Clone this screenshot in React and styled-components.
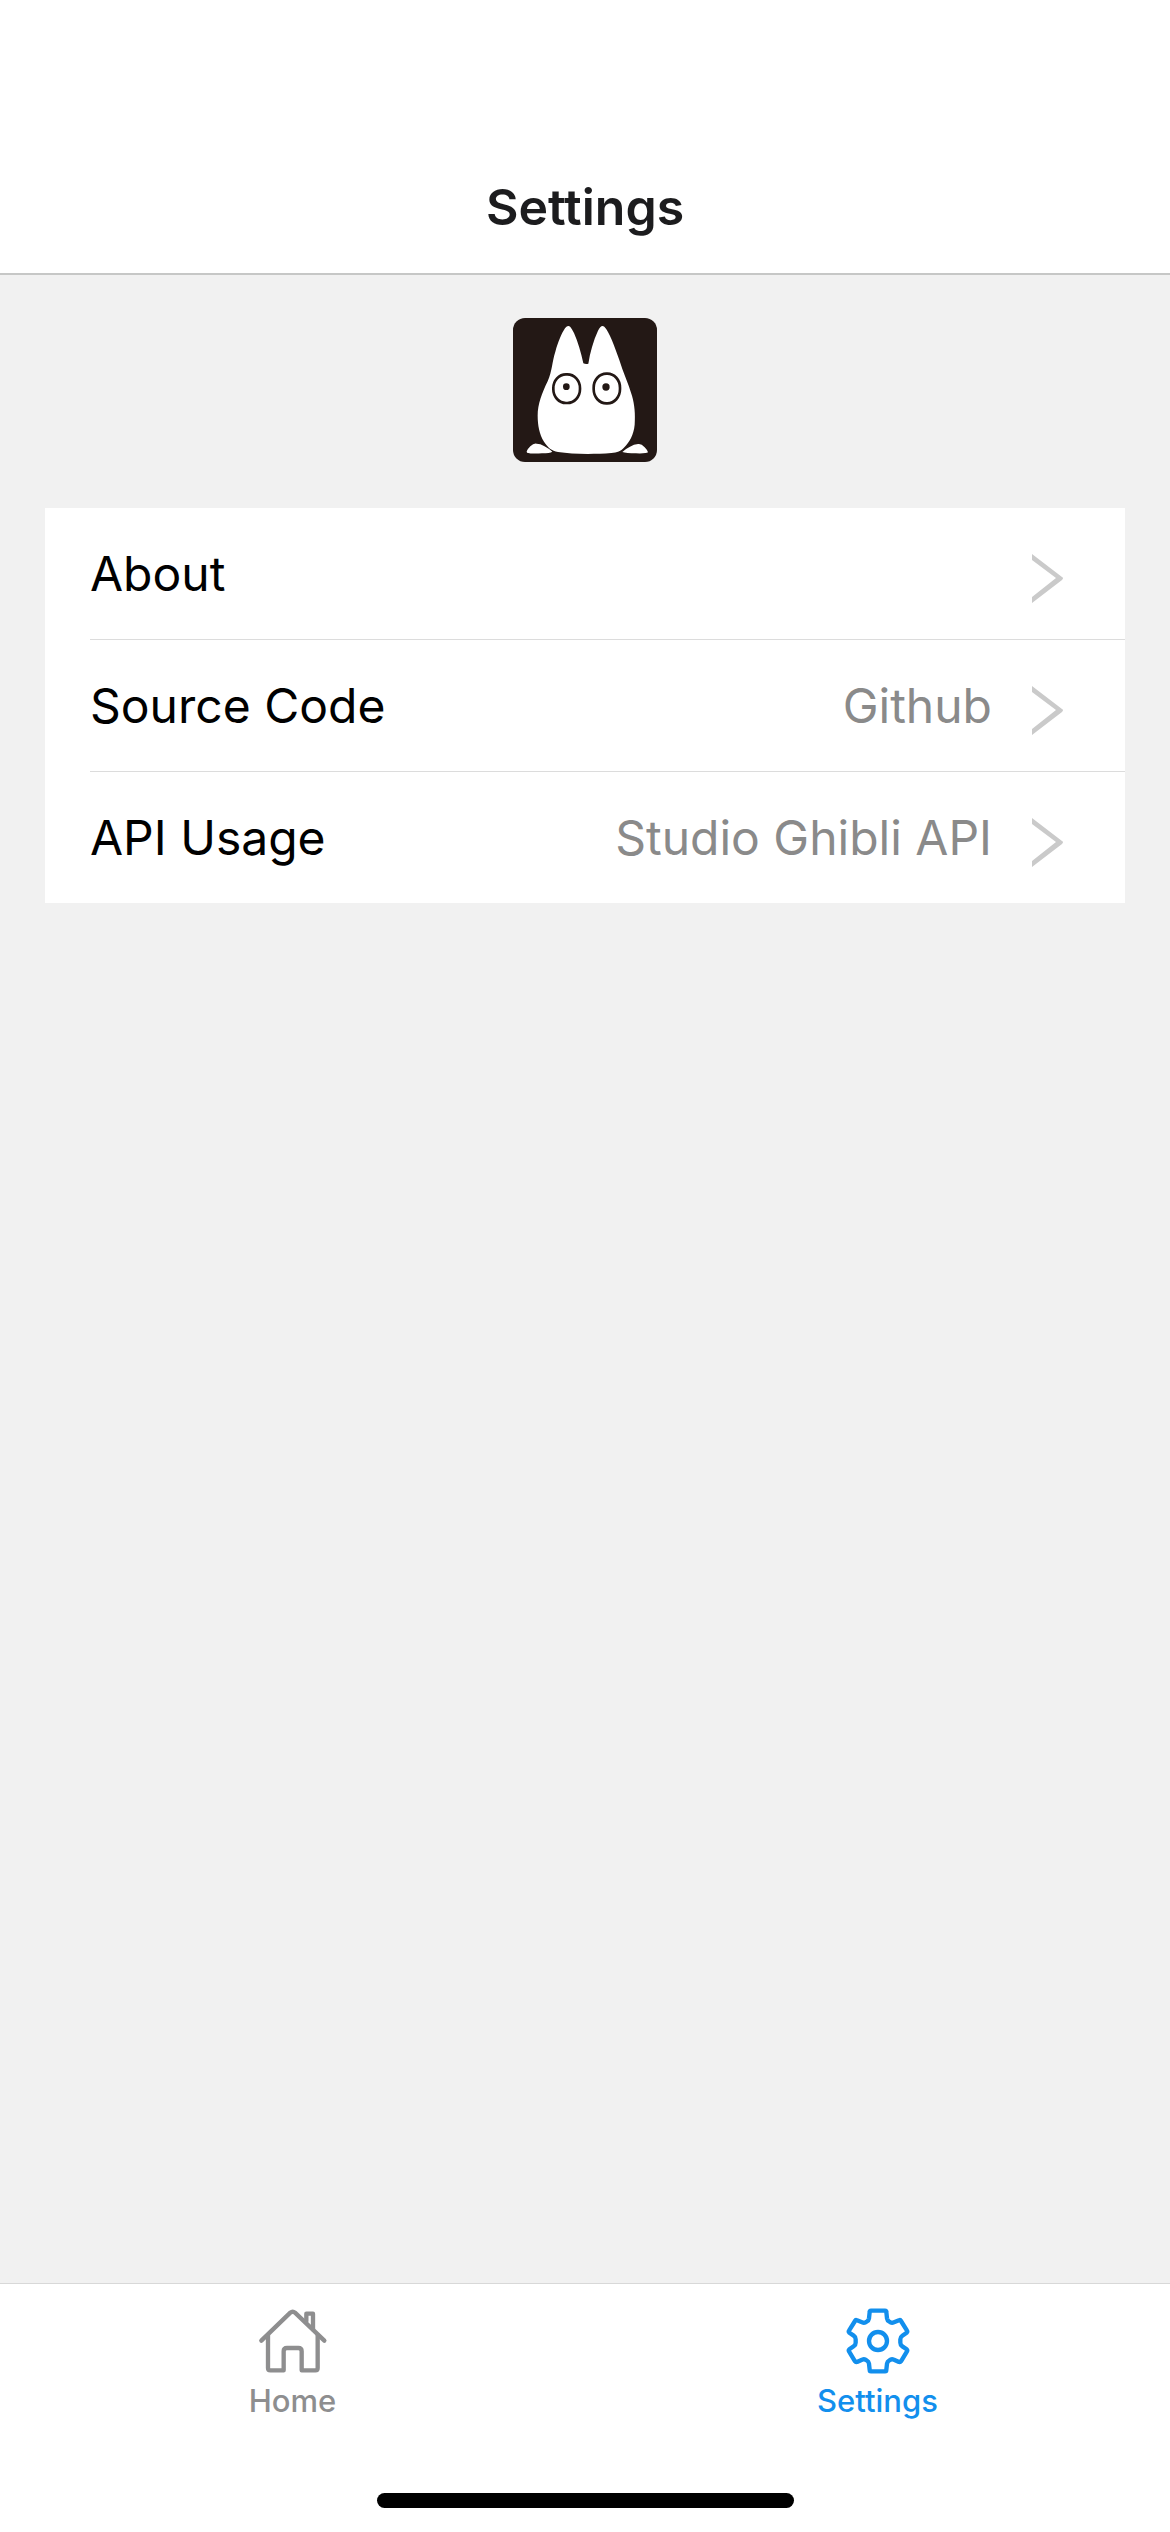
import React from "react";
import styled, { createGlobalStyle } from "styled-components";

const GlobalStyle = createGlobalStyle`
  *, *::before, *::after { box-sizing: border-box; }
  body {
    margin: 0;
    background: #f1f1f1;
    font-family: Inter, "Liberation Sans", sans-serif;
  }
`;

const Screen = styled.div`
  display: flex;
  flex-direction: column;
  min-height: 100vh;
`;

const Header = styled.header`
  display: flex;
  justify-content: center;
  padding: 177px 48px 36px;
  background: #fff;
  border-bottom: 2px solid #c6c7c6;
`;

const Title = styled.h1`
  margin: 0;
  font-size: 50px;
  line-height: 60px;
  font-weight: 600;
  color: #1c1c1e;
`;

const Content = styled.main`
  flex: 1;
  display: flex;
  flex-direction: column;
  gap: 46px;
  padding: 43px 45px;
`;

const Logo = styled.svg`
  display: block;
  align-self: center;
  width: 144px;
  height: 144px;
  border-radius: 12px;
  background: #231815;
`;

const List = styled.ul`
  margin: 0;
  padding: 0 0 0 45px;
  list-style: none;
  background: #fff;
`;

const Item = styled.li`
  & + & { border-top: 1px solid #dcdcdc; }
`;

const RowLink = styled.a`
  display: flex;
  align-items: center;
  height: 131px;
  padding-right: 62px;
  font-size: 48px;
  line-height: 60px;
  color: #000;
  text-decoration: none;
`;

const RowLabel = styled.span`
  flex: 1;
`;

const RowDetail = styled.span`
  color: #8a8a8a;
`;

const Chevron = styled.svg`
  width: 31px;
  height: 58px;
  margin-left: 40px;
`;

const TabBar = styled.nav`
  display: flex;
  background: #fff;
  border-top: 1px solid #d8d8d8;
`;

const Tab = styled.a`
  flex: 1;
  display: flex;
  flex-direction: column;
  align-items: center;
  gap: 6px;
  padding-top: 21px;
  font-size: 31px;
  line-height: 36px;
  font-weight: 500;
  color: ${(p) => (p.$active ? "#128fed" : "#8e8e8f")};
  text-decoration: none;
`;

const TabIcon = styled.svg`
  width: 72px;
  height: 72px;
  fill: none;
  stroke: currentColor;
  stroke-width: 13;
  stroke-linecap: round;
  stroke-linejoin: round;
`;

const BottomInset = styled.footer`
  display: flex;
  justify-content: center;
  padding: 74px 0 24px;
  background: #fff;
`;

const HomeIndicator = styled.div`
  width: 417px;
  height: 15px;
  border-radius: 8px;
  background: #000;
`;

const rows = [
  { label: "About", href: "#about" },
  { label: "Source Code", detail: "Github", href: "#source" },
  { label: "API Usage", detail: "Studio Ghibli API", href: "#api" },
];

function Mascot() {
  return (
    <Logo viewBox="39 39 432 432" role="img" aria-label="Totoro">
      <path
        fill="#fff"
        d="M204 63C210 61 216 72 222 84C234 110 243 143 250 175Q257 178 265 176C270 143 280 107 294 77C300 65 306 60 313 65C328 80 344 125 358 165C369 202 385 234 396 272C404 300 406 326 404 359C401 389 389 411 371 429C363 438 352 443 334 444C283 448 218 448 174 441C155 438 143 427 132 410C118 388 113 360 113 332C113 297 126 264 143 229C157 197 156 171 166 140C174 112 184 86 195 70Q199 64 204 63Z"
      />
      <path
        fill="#fff"
        d="M80 439Q82 433 91 424Q101 414 110 416Q121 416 132 423Q146 430 157 440Q150 445 126 445Q94 447 81 443ZM367 441Q377 431 390 425Q403 416 417 417Q425 417 434 427Q443 436 444 442Q439 446 408 445Q378 445 367 441Z"
      />
      <g fill="none" stroke="#231815" strokeWidth="8">
        <rect x="160" y="208" width="80" height="86" rx="38" ry="41" />
        <rect x="281" y="206" width="79" height="89" rx="38" ry="42" />
      </g>
      <circle cx="199" cy="245" r="10" fill="#231815" />
      <circle cx="318" cy="246" r="11" fill="#231815" />
    </Logo>
  );
}

function HomeIcon() {
  return (
    <TabIcon viewBox="79 105 216 216" aria-hidden="true">
      <path d="M92 212L179 128Q186 122 193 128L281 212" />
      <path d="M112 196V294Q112 301 119 301H159V244Q159 234 169 234H203Q213 234 213 244V301H254Q261 301 261 294V196" />
      <path d="M227 154V131H247V178" />
    </TabIcon>
  );
}

function GearIcon() {
  return (
    <TabIcon viewBox="153 105 216 216" aria-hidden="true">
      <path d="M240 122H282Q286 122 286 126L288 145Q289 152 295 155Q301 160 309 157L324 151Q328 149 330 153L348 182Q350 185 347 188L334 197Q328 201 328 208V218Q328 225 334 229L347 238Q350 241 348 244L330 274Q328 277 324 276L309 269Q301 266 295 271Q289 274 288 281L286 299Q286 304 282 304H240Q236 304 236 299L234 281Q233 274 227 271Q221 266 213 269L198 276Q194 277 192 274L174 244Q172 241 175 238L188 229Q194 225 194 218V208Q194 201 188 197L175 188Q172 185 174 182L192 153Q194 149 198 151L213 157Q221 160 227 155Q233 152 234 145L236 126Q236 122 240 122Z" />
      <circle cx="261" cy="213" r="27" />
    </TabIcon>
  );
}

export default function App() {
  return (
    <>
      <GlobalStyle />
      <Screen>
        <Header>
          <Title>Settings</Title>
        </Header>
        <Content>
          <Mascot />
          <List>
            {rows.map((row) => (
              <Item key={row.label}>
                <RowLink href={row.href}>
                  <RowLabel>{row.label}</RowLabel>
                  {row.detail && <RowDetail>{row.detail}</RowDetail>}
                  <Chevron viewBox="0 0 31 58" aria-hidden="true">
                    <path d="M0 9V15L24 33L0 52V58L30 35Q32 33 30 32Z" fill="#cacaca" />
                  </Chevron>
                </RowLink>
              </Item>
            ))}
          </List>
        </Content>
        <TabBar aria-label="Main">
          <Tab href="#home">
            <HomeIcon />
            Home
          </Tab>
          <Tab href="#settings" aria-current="page" $active>
            <GearIcon />
            Settings
          </Tab>
        </TabBar>
        <BottomInset>
          <HomeIndicator />
        </BottomInset>
      </Screen>
    </>
  );
}
